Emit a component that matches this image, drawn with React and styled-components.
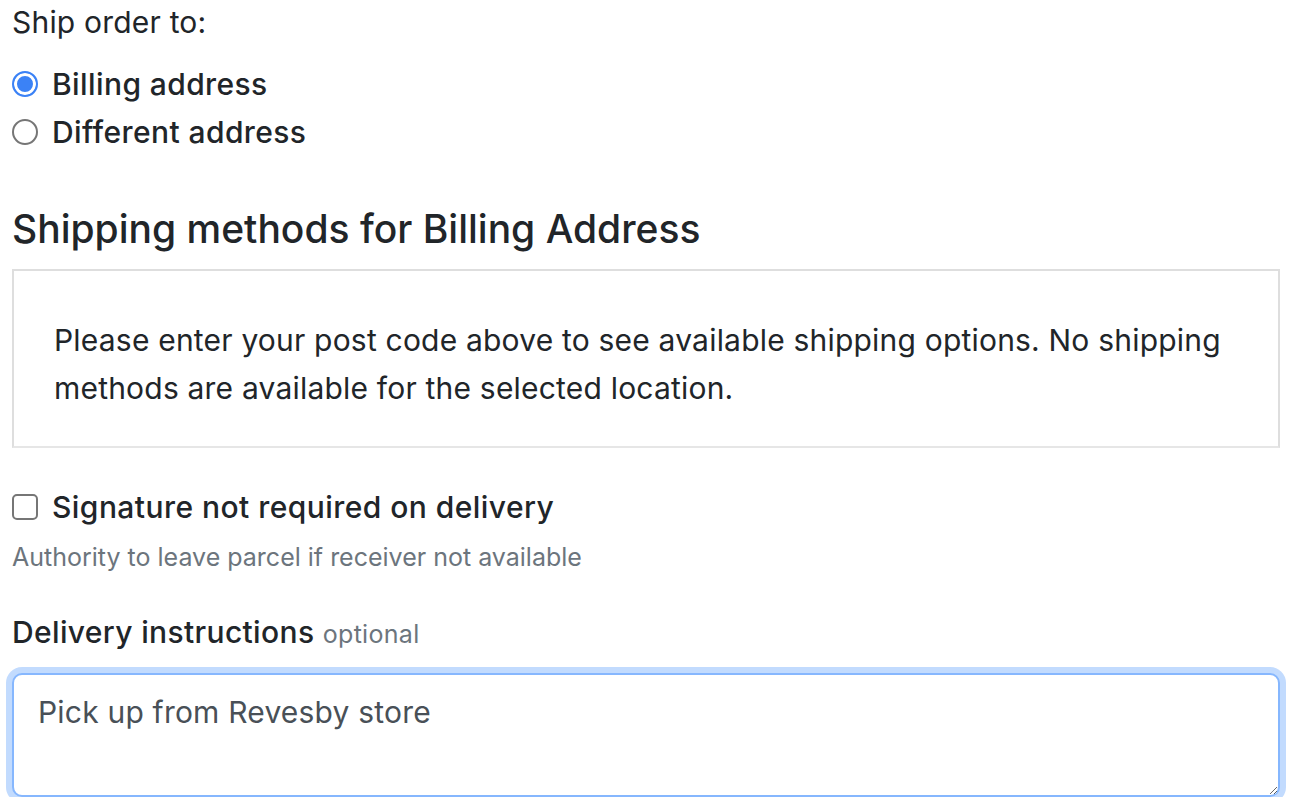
import React from 'react';
import styled, { createGlobalStyle } from 'styled-components';

const GlobalStyle = createGlobalStyle`
  body {
    margin: 0;
    background: #fff;
    color: #212529;
    font-family: Inter, "Liberation Sans", sans-serif;
  }
`;

const Page = styled.div`
  padding: 0 26px 0 12px;
  width: 1268px;
  font-size: 30px;
  line-height: 42px;
  letter-spacing: 0.2px;
`;

const Legend = styled.div`
  margin-top: 1px;
  margin-bottom: 17px;
`;

const OptionRow = styled.label`
  display: flex;
  align-items: center;
  gap: 14px;
  height: 48px;
  font-weight: 500;
  letter-spacing: 0.4px;
`;

const Radio = styled.input.attrs({ type: 'radio' })`
  appearance: none;
  margin: 0;
  width: 26px;
  height: 26px;
  border-radius: 50%;
  border: 2px solid #767676;
  box-sizing: border-box;
  background: #fff;

  &:checked {
    border-color: #3b82f6;
    background: #3b82f6;
    box-shadow: inset 0 0 0 3px #fff;
  }
`;

const Heading = styled.h2`
  margin: 49px 0 16px;
  font-size: 39px;
  line-height: 48px;
  font-weight: 500;
  letter-spacing: 0;
`;

const MethodsBox = styled.div`
  box-sizing: border-box;
  height: 179px;
  border: 2px solid #dedede;
  border-bottom-color: #e6e6e6;
  padding: 45px 40px 0;
  line-height: 48px;
`;

const CheckRow = styled.label`
  display: flex;
  align-items: center;
  gap: 14px;
  margin-top: 38px;
  height: 42px;
  font-weight: 500;
  letter-spacing: 0.45px;
`;

const Checkbox = styled.input.attrs({ type: 'checkbox' })`
  appearance: none;
  margin: 0;
  width: 26px;
  height: 26px;
  border-radius: 5px;
  border: 2px solid #767676;
  box-sizing: border-box;
  background: #fff;
`;

const Help = styled.div`
  margin-top: 11px;
  font-size: 25px;
  line-height: 36px;
  color: #6c757d;
  letter-spacing: 0;
`;

const FieldLabel = styled.div`
  margin-top: 36px;
  font-weight: 500;
  letter-spacing: 0.35px;
`;

const Optional = styled.span`
  font-size: 25px;
  font-weight: 400;
  color: #6c757d;
  letter-spacing: 0.3px;
`;

const TextArea = styled.textarea`
  display: block;
  box-sizing: border-box;
  width: 100%;
  height: 124px;
  margin-top: 18px;
  padding: 16px 24px;
  border: 2px solid #86b7fe;
  border-radius: 10px;
  box-shadow: 0 0 0 6px rgba(13, 110, 253, 0.25);
  outline: none;
  font-family: inherit;
  font-size: 30px;
  line-height: 42px;
  letter-spacing: 0.2px;
  color: #495057;
  resize: vertical;
`;

export default function App() {
  return (
    <>
      <GlobalStyle />
      <Page>
        <Legend>Ship order to:</Legend>
        <OptionRow>
          <Radio name="ship" defaultChecked />
          Billing address
        </OptionRow>
        <OptionRow>
          <Radio name="ship" />
          Different address
        </OptionRow>
        <Heading>Shipping methods for Billing Address</Heading>
        <MethodsBox>
          Please enter your post code above to see available shipping options. No shipping
          methods are available for the selected location.
        </MethodsBox>
        <CheckRow>
          <Checkbox />
          Signature not required on delivery
        </CheckRow>
        <Help>Authority to leave parcel if receiver not available</Help>
        <FieldLabel>
          Delivery instructions <Optional>optional</Optional>
        </FieldLabel>
        <TextArea defaultValue="Pick up from Revesby store" />
      </Page>
    </>
  );
}
